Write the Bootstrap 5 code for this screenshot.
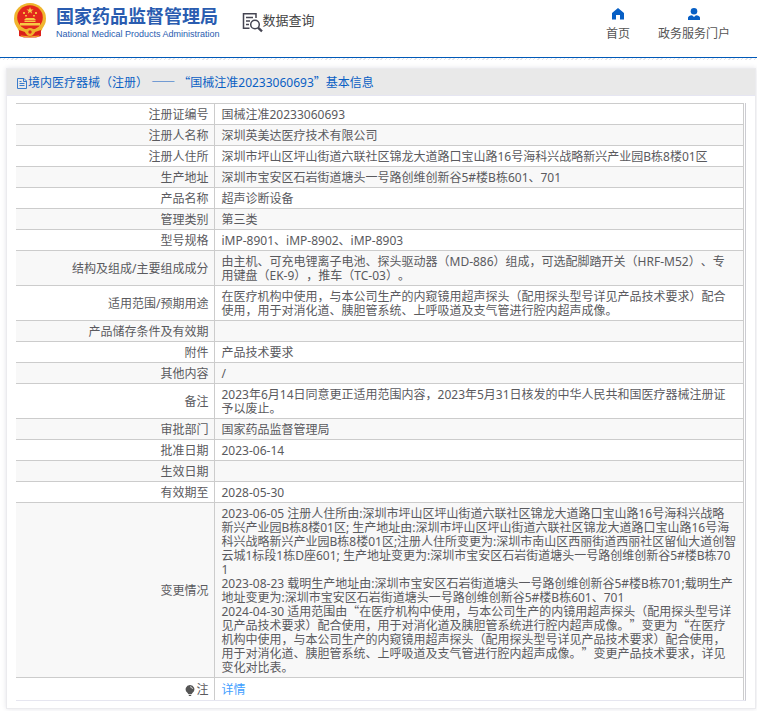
<!DOCTYPE html>
<html lang="zh-CN">
<head>
<meta charset="utf-8">
<meta name="viewport" content="width=device-width, initial-scale=1">
<title>国家药品监督管理局 数据查询</title>
<link href="https://cdn.jsdelivr.net/npm/bootstrap@5.3.0/dist/css/bootstrap.min.css" rel="stylesheet">
<style>
body{font-family:"Noto Sans","Noto Sans CJK SC",sans-serif;font-size:12px;line-height:14px;color:#5a5a5e;background:#fff;text-spacing-trim:space-all}
.site-head{height:58px;border-bottom:1px solid #0059b8}
.hatch{height:2px;background:repeating-linear-gradient(135deg,#e6e6ea 0 1px,#fff 1px 3px)}
.brand-link{padding:0 0 0 12px;color:#2a5cb0}
.brand-cn{font:700 18px/22px "Noto Sans CJK SC",sans-serif}
.brand-en{font:400 9px/16px "Liberation Sans",sans-serif;color:#2a5cb0}
.query-link{margin-left:22px;font-size:13px;line-height:20px;color:#444}
.top-nav{gap:28px;padding-right:27px}
.top-nav a{color:#555;line-height:16px}
.top-nav svg{margin-bottom:6px}
.panel{margin:8px 1px 2px 6px;border:1px solid #ebebee;border-radius:0;box-shadow:0 0 5px #e4e4e8}
.panel-title{min-height:27px;padding:2px 10px 0;background:#e9e9e9;border-bottom:1px solid #e6e6f2;color:#0a5fc4;font-size:12px}
.panel .panel-title{border-radius:0}
.panel-title h1{font-size:12px;line-height:20px;font-weight:400}
.record-box{margin:7px 9px 7px 9px;padding-right:1px;border-right:1px solid #ccccd2;border-bottom:1px solid #e6e6f0}
.record{border-collapse:collapse;color:inherit}
.record th,.record td{border:1px solid #ccc;padding:4px 5px 2px;font-weight:400;vertical-align:middle;word-break:break-all}
.record th{width:198px;text-align:right;border-left:0}
.record td{padding-left:7px}
.record tr:nth-child(even)>*{background:#f8f8f8}
.record tr{height:21px}
.record tr:last-child{height:22px}
.record tr:last-child>*{border-bottom:0}
.record a{color:#409eff}
.q{font-family:"Noto Sans CJK SC",sans-serif;line-height:0}
</style>
<script src="https://cdn.jsdelivr.net/npm/bootstrap@5.3.0/dist/js/bootstrap.bundle.min.js"></script>
</head>
<body>
<header class="site-head d-flex align-items-start">
  <a class="brand-link d-flex gap-2 text-decoration-none" href="#">
    <svg width="36" height="40" viewBox="0 0 36 40" aria-hidden="true">
      <path d="M7 29h22v7l-5 1.500H12L7 36z" fill="#e0241c"/>
      <ellipse cx="18" cy="18.500" rx="16" ry="15.500" fill="#f0b52e"/>
      <ellipse cx="18" cy="17.500" rx="12.800" ry="12.300" fill="#e3261d"/>
      <path d="M18 7l.9 2.500h2.700l-2.200 1.600.8 2.600-2.200-1.600-2.200 1.600.8-2.600-2.200-1.600h2.700z" fill="#f8cf47"/>
      <path d="M11 12h2v2h-2zM23 12h2v2h-2zM13 15h2v1.500h-2zM21 15h2v1.500h-2z" fill="#f4b63c"/>
      <path d="M12 20l2-2h8l2 2zM12.500 20.500h11V22h-11zM8 23h20v2.500H8z" fill="#f7c944"/>
      <path d="M5 25c4 4 8 4.500 13 4.500S27 29 31 25l-1 5c-4 4-20 4-24 0z" fill="#f0b52e"/>
      <circle cx="18" cy="32" r="4" fill="#efb22f"/><circle cx="18" cy="32" r="1.700" fill="#e0241c"/>
      <path d="M7 30l6 2 1 3-7-1.500zM29 30l-6 2-1 3 7-1.500z" fill="#d81f1a"/>
      <path d="M9 35.500l9 1 9-1v1l-9 1-9-1z" fill="#f0b52e"/>
    </svg>
    <span class="d-flex flex-column pt-1"><span class="brand-cn">国家药品监督管理局</span><span class="brand-en">National Medical Products Administration</span></span>
  </a>
  <a class="query-link d-flex text-decoration-none pt-2" href="#">
    <svg class="mt-1" width="21" height="22" viewBox="0 0 21 22" fill="none" stroke="#454552" stroke-width="1.500" aria-hidden="true">
      <path d="M14 6V1.800H1.500V16.200H7.500M4 5.500h7M4 9h4M4 12.500h3"/><circle cx="13" cy="12.500" r="4.300"/><path d="M16 15.700l4 3.600" stroke-width="2.400"/>
    </svg><span class="mt-1 lh-sm">数据查询</span>
  </a>
  <nav class="top-nav d-flex ms-auto pt-2 text-center">
    <a class="text-decoration-none d-flex flex-column align-items-center" href="#"><svg width="14" height="12" viewBox="0 0 14 12" fill="#075fc5" aria-hidden="true"><path d="M7 0l6 5v6.500H9V7H5v4.500H1V5z"/></svg>首页</a>
    <a class="text-decoration-none d-flex flex-column align-items-center" href="#"><svg width="14" height="12" viewBox="0 0 14 12" fill="#075fc5" aria-hidden="true"><circle cx="7" cy="3.300" r="3.300"/><path d="M1 12V9.500Q1.500 7.500 5 7.200L7 9l2-1.800q3.500.3 4 2.300V12z"/></svg>政务服务门户</a>
  </nav>
</header>
<div class="hatch"></div>
<main class="panel card">
  <div class="panel-title card-header d-flex align-items-center">
    <svg width="11" height="12" viewBox="0 0 11 12" fill="none" stroke="#3a7ccc" aria-hidden="true"><path d="M.5 1.500H7L9.500 4v7.500h-9zM6.500 1.500v3h3M2.500 4.500h2M2.500 6.500h5M2.500 8.500h5"/></svg>
    <h1 class="mb-0">境内医疗器械（注册） <span class="q">——</span> <span class="q">“</span>国械注准20233060693<span class="q">”</span>基本信息</h1>
  </div>
  <div class="record-box">
    <table class="record w-100">
      <tbody>
        <tr><th scope="row">注册证编号</th><td>国械注准20233060693</td></tr>
        <tr><th scope="row">注册人名称</th><td>深圳英美达医疗技术有限公司</td></tr>
        <tr><th scope="row">注册人住所</th><td>深圳市坪山区坪山街道六联社区锦龙大道路口宝山路16号海科兴战略新兴产业园B栋8楼01区</td></tr>
        <tr><th scope="row">生产地址</th><td>深圳市宝安区石岩街道塘头一号路创维创新谷5#楼B栋601、701</td></tr>
        <tr><th scope="row">产品名称</th><td>超声诊断设备</td></tr>
        <tr><th scope="row">管理类别</th><td>第三类</td></tr>
        <tr><th scope="row">型号规格</th><td>iMP-8901、iMP-8902、iMP-8903</td></tr>
        <tr><th scope="row">结构及组成/主要组成成分</th><td>由主机、可充电锂离子电池、探头驱动器（MD-886）组成，可选配脚踏开关（HRF-M52）、专<br>用键盘（EK-9），推车（TC-03）。</td></tr>
        <tr><th scope="row">适用范围/预期用途</th><td>在医疗机构中使用，与本公司生产的内窥镜用超声探头（配用探头型号详见产品技术要求）配合<br>使用，用于对消化道、胰胆管系统、上呼吸道及支气管进行腔内超声成像。</td></tr>
        <tr><th scope="row">产品储存条件及有效期</th><td></td></tr>
        <tr><th scope="row">附件</th><td>产品技术要求</td></tr>
        <tr><th scope="row">其他内容</th><td>/</td></tr>
        <tr><th scope="row">备注</th><td>2023年6月14日同意更正适用范围内容，2023年5月31日核发的中华人民共和国医疗器械注册证<br>予以废止。</td></tr>
        <tr><th scope="row">审批部门</th><td>国家药品监督管理局</td></tr>
        <tr><th scope="row">批准日期</th><td>2023-06-14</td></tr>
        <tr><th scope="row">生效日期</th><td></td></tr>
        <tr><th scope="row">有效期至</th><td>2028-05-30</td></tr>
        <tr><th scope="row">变更情况</th><td>2023-06-05 注册人住所由:深圳市坪山区坪山街道六联社区锦龙大道路口宝山路16号海科兴战略<br>新兴产业园B栋8楼01区; 生产地址由:深圳市坪山区坪山街道六联社区锦龙大道路口宝山路16号海<br>科兴战略新兴产业园B栋8楼01区;注册人住所变更为:深圳市南山区西丽街道西丽社区留仙大道创智<br>云城1标段1栋D座601; 生产地址变更为:深圳市宝安区石岩街道塘头一号路创维创新谷5#楼B栋70<br>1<br>2023-08-23 载明生产地址由:深圳市宝安区石岩街道塘头一号路创维创新谷5#楼B栋701;载明生产<br>地址变更为:深圳市宝安区石岩街道塘头一号路创维创新谷5#楼B栋601、701<br>2024-04-30 适用范围由<span class="q">“</span>在医疗机构中使用，与本公司生产的内镜用超声探头（配用探头型号详<br>见产品技术要求）配合使用，用于对消化道及胰胆管系统进行腔内超声成像。<span class="q">”</span>变更为<span class="q">“</span>在医疗<br>机构中使用，与本公司生产的内窥镜用超声探头（配用探头型号详见产品技术要求）配合使用，<br>用于对消化道、胰胆管系统、上呼吸道及支气管进行腔内超声成像。<span class="q">”</span>变更产品技术要求，详见<br>变化对比表。</td></tr>
        <tr><th scope="row"><svg width="10" height="12" viewBox="0 0 10 12" fill="#555" aria-hidden="true"><path d="M5 0a4.300 4.300 0 0 1 2.800 7.600L6.700 9H3.300L2.200 7.600A4.300 4.300 0 0 1 5 0zM3.500 9.700h3L6 11H4z"/><path d="M5 1.700Q7.400 2 7.500 4" fill="none" stroke="#eee" stroke-width=".8"/></svg>&#8202;注</th><td><a class="text-decoration-none" href="#">详情</a></td></tr>
      </tbody>
    </table>
  </div>
</main>
</body>
</html>
